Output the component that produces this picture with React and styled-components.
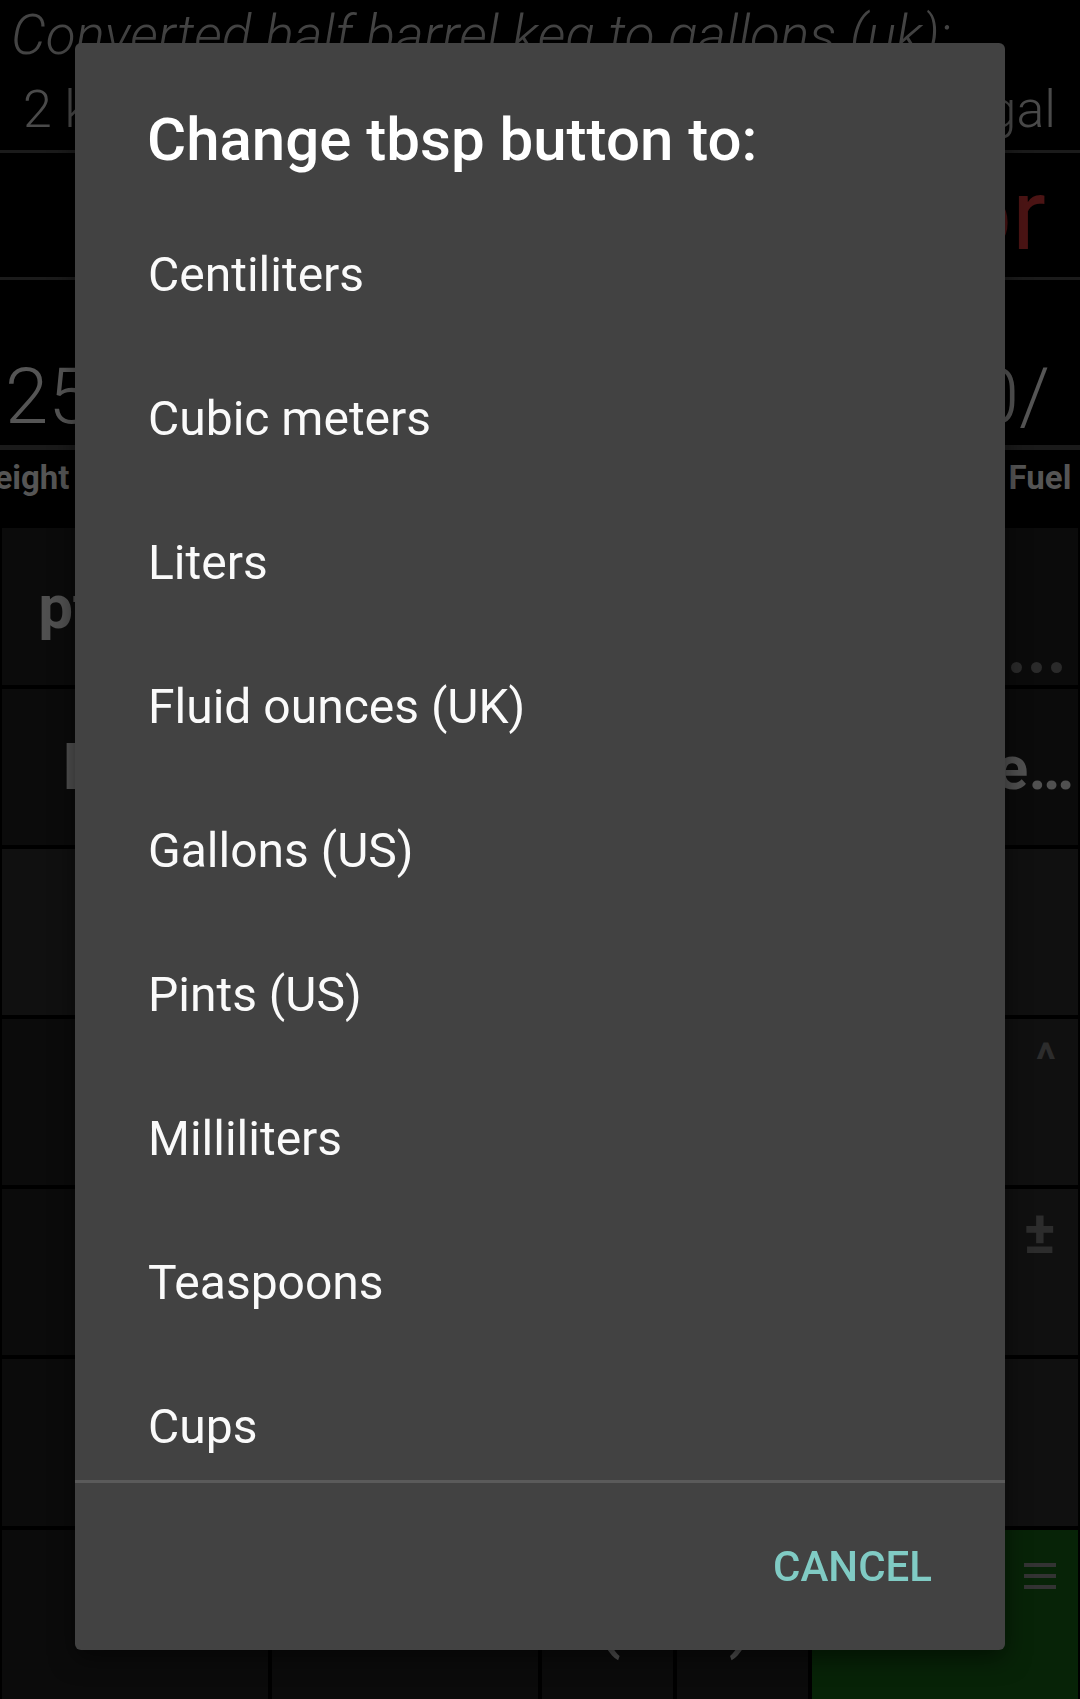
import React from 'react'
import styled, { createGlobalStyle } from 'styled-components'

const units = [
  'Centiliters',
  'Cubic meters',
  'Liters',
  'Fluid ounces (UK)',
  'Gallons (US)',
  'Pints (US)',
  'Milliliters',
  'Teaspoons',
  'Cups',
]

const App = () => {
  return (
    <>
      <GlobalStyle />
      <Screen>
        <Header>
          <Caption>Converted half barrel keg to gallons (uk):</Caption>
          <ResultLine>
            <span>2 kegs</span>
            <span>27.25 gal</span>
          </ResultLine>
        </Header>
        <ErrorRow>Error</ErrorRow>
        <ValueRow>
          <span>25</span>
          <span>0/</span>
        </ValueRow>
        <LabelRow>
          <Label $pull>Weight</Label>
          <Label $clip>Fuel Economy</Label>
        </LabelRow>

        <Keypad>
          <Key>pt (US)</Key>
          <Key />
          <Key />
          <Key>
            tbsp
            <MoreDots>
              <i />
              <i />
              <i />
            </MoreDots>
          </Key>

          <Key>km/L</Key>
          <Key />
          <Key />
          <Key>Volume…</Key>

          <Key $tone="#101010" />
          <Key $tone="#101010" />
          <Key $tone="#101010" />
          <Key $tone="#101010" />

          <Key />
          <Key />
          <Key />
          <Key $corner $tone="#101010">^</Key>

          <Key />
          <Key />
          <Key />
          <Key $corner $big $tone="#101010">±</Key>

          <Key />
          <Key />
          <Key />
          <Key $tone="#101010" />

          <Key />
          <Key />
          <SplitKey>
            <Key $paren>(</Key>
            <Key $paren>)</Key>
          </SplitKey>
          <Key $corner $menu $tone="#072307">
            <svg width="32" height="28" viewBox="0 0 32 28">
              <rect x="0" y="0" width="32" height="4" fill="#333" />
              <rect x="0" y="11" width="32" height="4" fill="#333" />
              <rect x="0" y="22" width="32" height="4" fill="#333" />
            </svg>
          </Key>
        </Keypad>
      </Screen>

      <Scrim>
        <Dialog>
          <Title>Change tbsp button to:</Title>
          <List>
            {units.map((u) => (
              <Item key={u}>{u}</Item>
            ))}
          </List>
          <Divider />
          <Actions>
            <TextButton>CANCEL</TextButton>
          </Actions>
        </Dialog>
      </Scrim>
    </>
  )
}

export default App

const GlobalStyle = createGlobalStyle`
  html, body {
    margin: 0;
    padding: 0;
    background: #000;
    overflow: hidden;
  }
  body {
    font-family: Roboto, "Liberation Sans", sans-serif;
  }
`

const Screen = styled.div`
  width: 1080px;
  height: 1699px;
  background: #000;
  display: flex;
  flex-direction: column;
  overflow: hidden;
`

const Header = styled.div`
  height: 153px;
  border-bottom: 3px solid #1b1b1b;
  padding-top: 4px;
  box-sizing: border-box;
  display: flex;
  flex-direction: column;
  gap: 14px;
`

const Caption = styled.div`
  font-size: 55px;
  line-height: 62px;
  font-style: italic;
  font-weight: 300;
  color: #444;
  padding-left: 11px;
  white-space: nowrap;
`

const ResultLine = styled.div`
  font-size: 52px;
  line-height: 60px;
  font-weight: 300;
  color: #4a4a4a;
  display: flex;
  justify-content: space-between;
  padding: 0 24px 0 23px;
  white-space: nowrap;
`

const ErrorRow = styled.div`
  height: 124px;
  border-bottom: 3px solid #1b1b1b;
  font-size: 100px;
  line-height: 124px;
  color: #4b1414;
  text-align: right;
  padding-right: 34px;
  overflow: hidden;
`

const ValueRow = styled.div`
  height: 170px;
  box-sizing: border-box;
  border-bottom: 5px solid #1a1a1a;
  display: flex;
  justify-content: space-between;
  align-items: flex-end;
  padding: 0 30px 9px 5px;
  font-size: 78px;
  line-height: 78px;
  font-weight: 300;
  color: #555;
`

const LabelRow = styled.div`
  height: 78px;
  box-sizing: border-box;
  padding-top: 8px;
  display: flex;
  justify-content: space-between;
  font-size: 33px;
  line-height: 40px;
  font-weight: 700;
  color: #555;
  overflow: hidden;
`

const Label = styled.span`
  white-space: nowrap;
  margin-left: ${(p) => (p.$pull ? '-34px' : '0')};
  margin-right: ${(p) => (p.$clip ? '-136px' : '0')};
`

const Keypad = styled.div`
  flex: 1;
  display: grid;
  grid-template-columns: repeat(4, 1fr);
  grid-template-rows: 157px 156px 166px 166px 166px 167px 1fr;
  gap: 4px;
  padding: 0 2px;
`

const Key = styled.div`
  position: relative;
  background: ${(p) => p.$tone || '#0b0b0b'};
  display: flex;
  justify-content: ${(p) => (p.$corner ? 'flex-end' : 'center')};
  align-items: ${(p) => (p.$corner ? 'flex-start' : 'center')};
  padding: ${(p) =>
    p.$menu ? '33px 22px 0 0' : p.$big ? '14px 22px 0 0' : p.$corner ? '18px 22px 0 0' : '0'};
  font-size: ${(p) =>
    p.$big ? '60px' : p.$corner ? '46px' : p.$paren ? '80px' : '62px'};
  line-height: ${(p) => (p.$corner ? 1 : 'normal')};
  font-weight: ${(p) => (p.$paren ? 400 : 700)};
  color: ${(p) => (p.$corner ? '#2c2c2c' : '#505050')};
  white-space: nowrap;
  overflow: hidden;
`

const SplitKey = styled.div`
  display: grid;
  grid-template-columns: 1fr 1fr;
  gap: 4px;
`

const MoreDots = styled.div`
  position: absolute;
  right: 16px;
  bottom: 12px;
  display: flex;
  gap: 9px;

  i {
    width: 11px;
    height: 11px;
    border-radius: 50%;
    background: #2a2a2a;
  }
`

const Scrim = styled.div`
  position: fixed;
  inset: 0;
  display: flex;
  justify-content: center;
  align-items: flex-start;
  padding-top: 43px;
`

const Dialog = styled.div`
  width: 930px;
  height: 1607px;
  background: #424242;
  border-radius: 6px;
  display: flex;
  flex-direction: column;
  overflow: hidden;
  box-shadow: 0 8px 24px rgba(0, 0, 0, 0.5);
`

const Title = styled.div`
  padding: 61px 72px 0;
  margin-bottom: 27px;
  font-size: 60px;
  line-height: 72px;
  font-weight: 500;
  color: #fff;
`

const List = styled.div`
  height: 1277px;
  overflow: hidden;
`

const Item = styled.div`
  height: 144px;
  display: flex;
  align-items: center;
  padding-left: 73px;
  font-size: 48px;
  line-height: 1.2;
  color: #fafafa;
`

const Divider = styled.div`
  height: 3px;
  background: #5a5a5a;
`

const Actions = styled.div`
  flex: 1;
  display: flex;
  justify-content: flex-end;
  align-items: center;
  padding-right: 73px;
  padding-top: 2px;
`

const TextButton = styled.span`
  font-size: 42px;
  line-height: 1.2;
  font-weight: 500;
  color: #80cbc4;
`
